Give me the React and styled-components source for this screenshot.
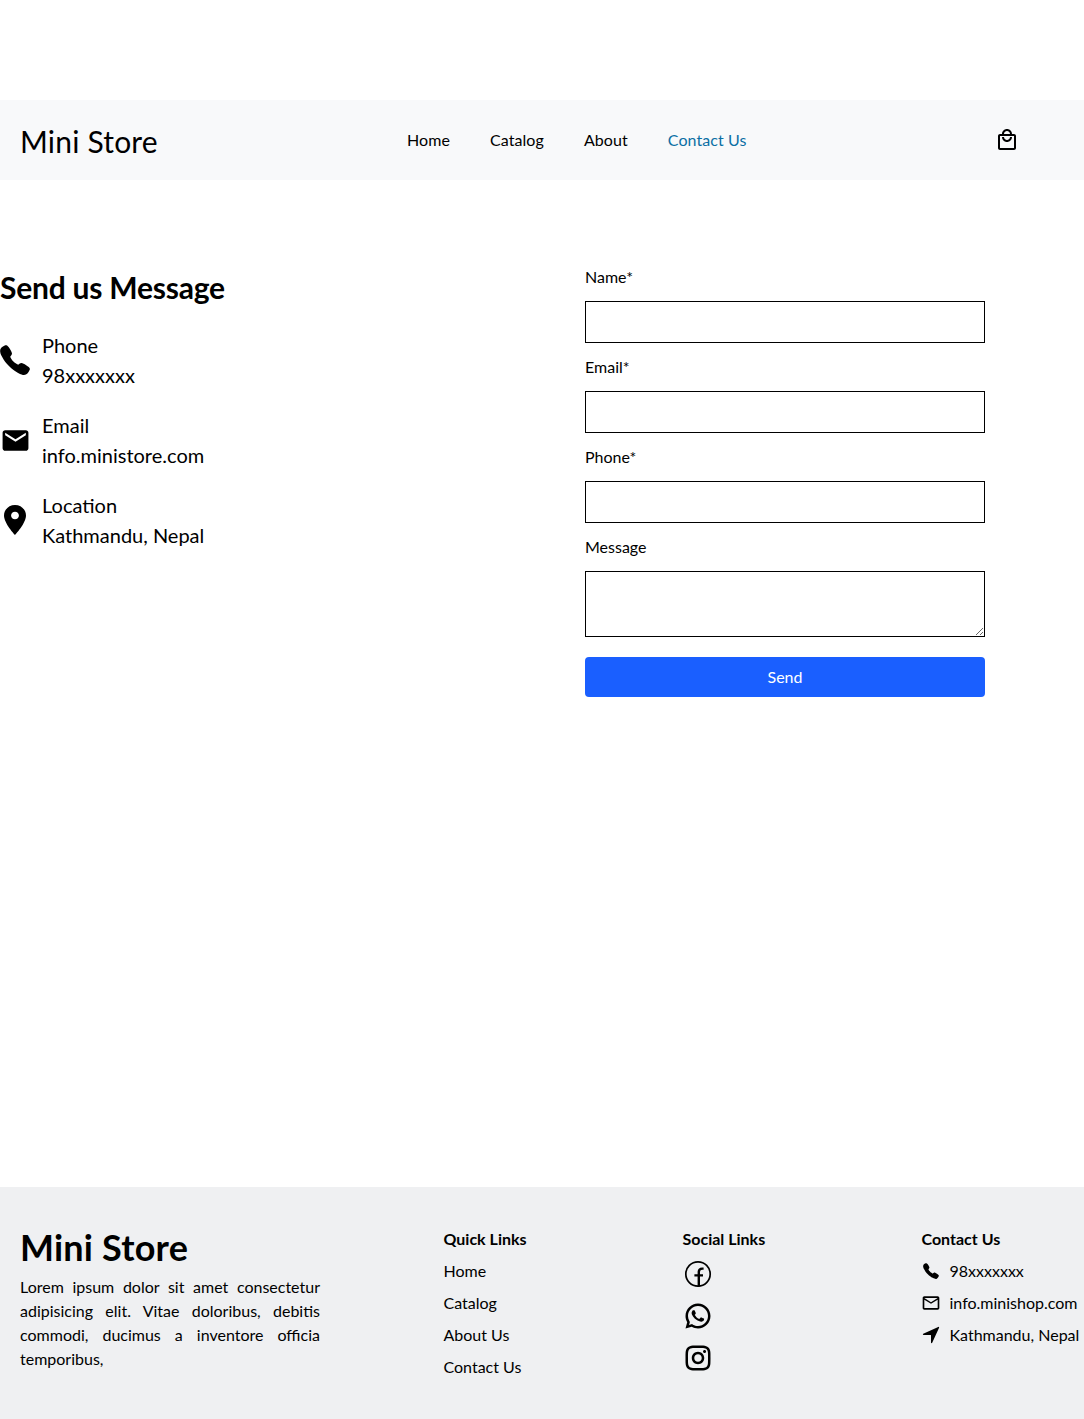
import React from "react";
import styled, { createGlobalStyle } from "styled-components";
import { MdEmail, MdOutlineMailOutline, MdOutlineLocalMall } from "react-icons/md";
import { IoCall, IoNavigate } from "react-icons/io5";
import { RiWhatsappLine, RiInstagramLine } from "react-icons/ri";

const Global = createGlobalStyle`
  * { box-sizing: border-box; }
  html, body { margin: 0; padding: 0; background: #fff; }
  body { font-family: Lato, "Open Sans", sans-serif; color: #000; font-size: 16px; }
`;
const Page = styled.div`
  padding-top: 100px;
  height: 1419px;
  overflow: hidden;
  display: flex;
  flex-direction: column;
`;
const Nav = styled.nav`
  height: 80px;
  background: #f8f9fa;
  display: flex;
  align-items: center;
  flex: none;
`;
const Logo = styled.div`
  width: 407px;
  padding: 1px 0 0 20px;
  font-size: 30px;
  line-height: 40px;
  letter-spacing: 0.2px;
`;
const NavLinks = styled.div`
  display: flex;
  gap: 40px;
  flex: 1;
`;
const NavLink = styled.a`
  font-size: 16px;
  line-height: 20px;
  letter-spacing: 0.08px;
  color: ${(p) => (p.$active ? "#0b6fa4" : "#000")};
`;
const Cart = styled.div`
  width: 89px;
  display: flex;
  svg { display: block; }
`;
const Main = styled.main`
  flex: 1;
  display: grid;
  grid-template-columns: 585px 400px;
  padding-top: 87px;
  align-content: start;
`;
const Heading = styled.h2`
  margin: 0 0 23px;
  font-size: 30px;
  line-height: 40px;
  font-weight: 700;
  letter-spacing: -0.22px;
`;
const Info = styled.div`
  display: flex;
  align-items: center;
  gap: 12px;
  height: 60px;
  margin-bottom: 20px;
  font-size: 20px;
  line-height: 30px;
`;
const IconBox = styled.span`
  width: 30px;
  flex: none;
  display: flex;
  justify-content: center;
  svg { display: block; flex: none; }
`;
const Form = styled.form`
  display: flex;
  flex-direction: column;
`;
const Label = styled.label`
  display: block;
  font-size: 16px;
  line-height: 20px;
  margin-bottom: 14px;
`;
const Input = styled.input`
  display: block;
  width: 100%;
  height: 42px;
  border: 1px solid #000;
  background: #fff;
  margin-bottom: 14px;
  padding: 0 8px;
`;
const Area = styled.textarea`
  display: block;
  width: 100%;
  height: 66px;
  border: 1px solid #000;
  background: #fff;
  margin-bottom: 20px;
  padding: 8px;
`;
const Send = styled.button`
  display: block;
  width: 100%;
  height: 40px;
  border: 0;
  border-radius: 4px;
  background: #1a5fff;
  color: #fff;
  font: 16px/20px Lato, sans-serif;
`;
const Footer = styled.footer`
  height: 232px;
  flex: none;
  background: #eff0f2;
  display: grid;
  grid-template-columns: 423.5px 239px 239px 1fr;
  padding: 32px 0 0 20px;
`;
const Brand = styled.div`
  width: 300px;
`;
const BrandName = styled.div`
  font-size: 36px;
  line-height: 44px;
  font-weight: 700;
  letter-spacing: 0.2px;
  margin-top: 6px;
  margin-bottom: 6px;
`;
const Lorem = styled.p`
  margin: 0;
  font-size: 16px;
  line-height: 24px;
  text-align: justify;
`;
const FootTitle = styled.div`
  font-size: 16px;
  line-height: 20px;
  font-weight: 700;
  margin-top: 10px;
`;
const FootLink = styled.div`
  font-size: 16px;
  line-height: 20px;
  margin-top: 12px;
`;
const Social = styled.div`
  display: flex;
  flex-direction: column;
  gap: 12px;
  margin-top: 10px;
  svg { display: block; }
`;
const ContactRow = styled.div`
  display: flex;
  align-items: center;
  gap: 8px;
  height: 20px;
  line-height: 18px;
  margin-top: 12px;
  white-space: nowrap;
`;
const SmallIcon = styled.span`
  width: 20px;
  flex: none;
  display: flex;
  justify-content: center;
  transform: translateX(-1px);
  svg { display: block; flex: none; }
`;

const Pin = () => (
  <svg width="22" height="30" viewBox="5 2 14 20" preserveAspectRatio="none" fill="currentColor">
    <path d="M12 2C8.13 2 5 5.13 5 9c0 5.25 7 13 7 13s7-7.75 7-13c0-3.87-3.13-7-7-7zm0 9.5c-1.38 0-2.5-1.12-2.5-2.5s1.12-2.5 2.5-2.5 2.5 1.12 2.5 2.5-1.12 2.5-2.5 2.5z" />
  </svg>
);

const FacebookOutline = () => (
  <svg width="30" height="30" viewBox="0 0 30 30" fill="none" stroke="currentColor">
    <circle cx="15" cy="15" r="12.2" strokeWidth="1.7" />
    <path d="M15.8 27.4V13.2c0-2.4 1.3-3.6 3.4-3.6h1.4M11.4 16.4h8.6" strokeWidth="2.4" />
  </svg>
);

export default function App() {
  return (
    <Page>
      <Global />
      <Nav>
        <Logo>Mini Store</Logo>
        <NavLinks>
          <NavLink>Home</NavLink>
          <NavLink>Catalog</NavLink>
          <NavLink>About</NavLink>
          <NavLink $active>Contact Us</NavLink>
        </NavLinks>
        <Cart><MdOutlineLocalMall size={24} /></Cart>
      </Nav>
      <Main>
        <div>
          <Heading>Send us Message</Heading>
          <Info><IconBox><IoCall size={34} /></IconBox><div>Phone<br />98xxxxxxx</div></Info>
          <Info><IconBox><MdEmail size={31} /></IconBox><div>Email<br />info.ministore.com</div></Info>
          <Info><IconBox><Pin /></IconBox><div>Location<br />Kathmandu, Nepal</div></Info>
        </div>
        <Form>
          <Label>Name*</Label>
          <Input />
          <Label>Email*</Label>
          <Input />
          <Label>Phone*</Label>
          <Input />
          <Label>Message</Label>
          <Area />
          <Send type="button">Send</Send>
        </Form>
      </Main>
      <Footer>
        <Brand>
          <BrandName>Mini Store</BrandName>
          <Lorem>Lorem ipsum dolor sit amet consectetur adipisicing elit. Vitae doloribus, debitis commodi, ducimus a inventore officia temporibus,</Lorem>
        </Brand>
        <div>
          <FootTitle>Quick Links</FootTitle>
          <FootLink>Home</FootLink>
          <FootLink>Catalog</FootLink>
          <FootLink>About Us</FootLink>
          <FootLink>Contact Us</FootLink>
        </div>
        <div>
          <FootTitle>Social Links</FootTitle>
          <Social>
            <FacebookOutline />
            <RiWhatsappLine size={30} />
            <RiInstagramLine size={30} />
          </Social>
        </div>
        <div>
          <FootTitle>Contact Us</FootTitle>
          <ContactRow><SmallIcon><IoCall size={18} /></SmallIcon>98xxxxxxx</ContactRow>
          <ContactRow><SmallIcon><MdOutlineMailOutline size={20} /></SmallIcon>info.minishop.com</ContactRow>
          <ContactRow><SmallIcon><IoNavigate size={20} /></SmallIcon>Kathmandu, Nepal</ContactRow>
        </div>
      </Footer>
    </Page>
  );
}
